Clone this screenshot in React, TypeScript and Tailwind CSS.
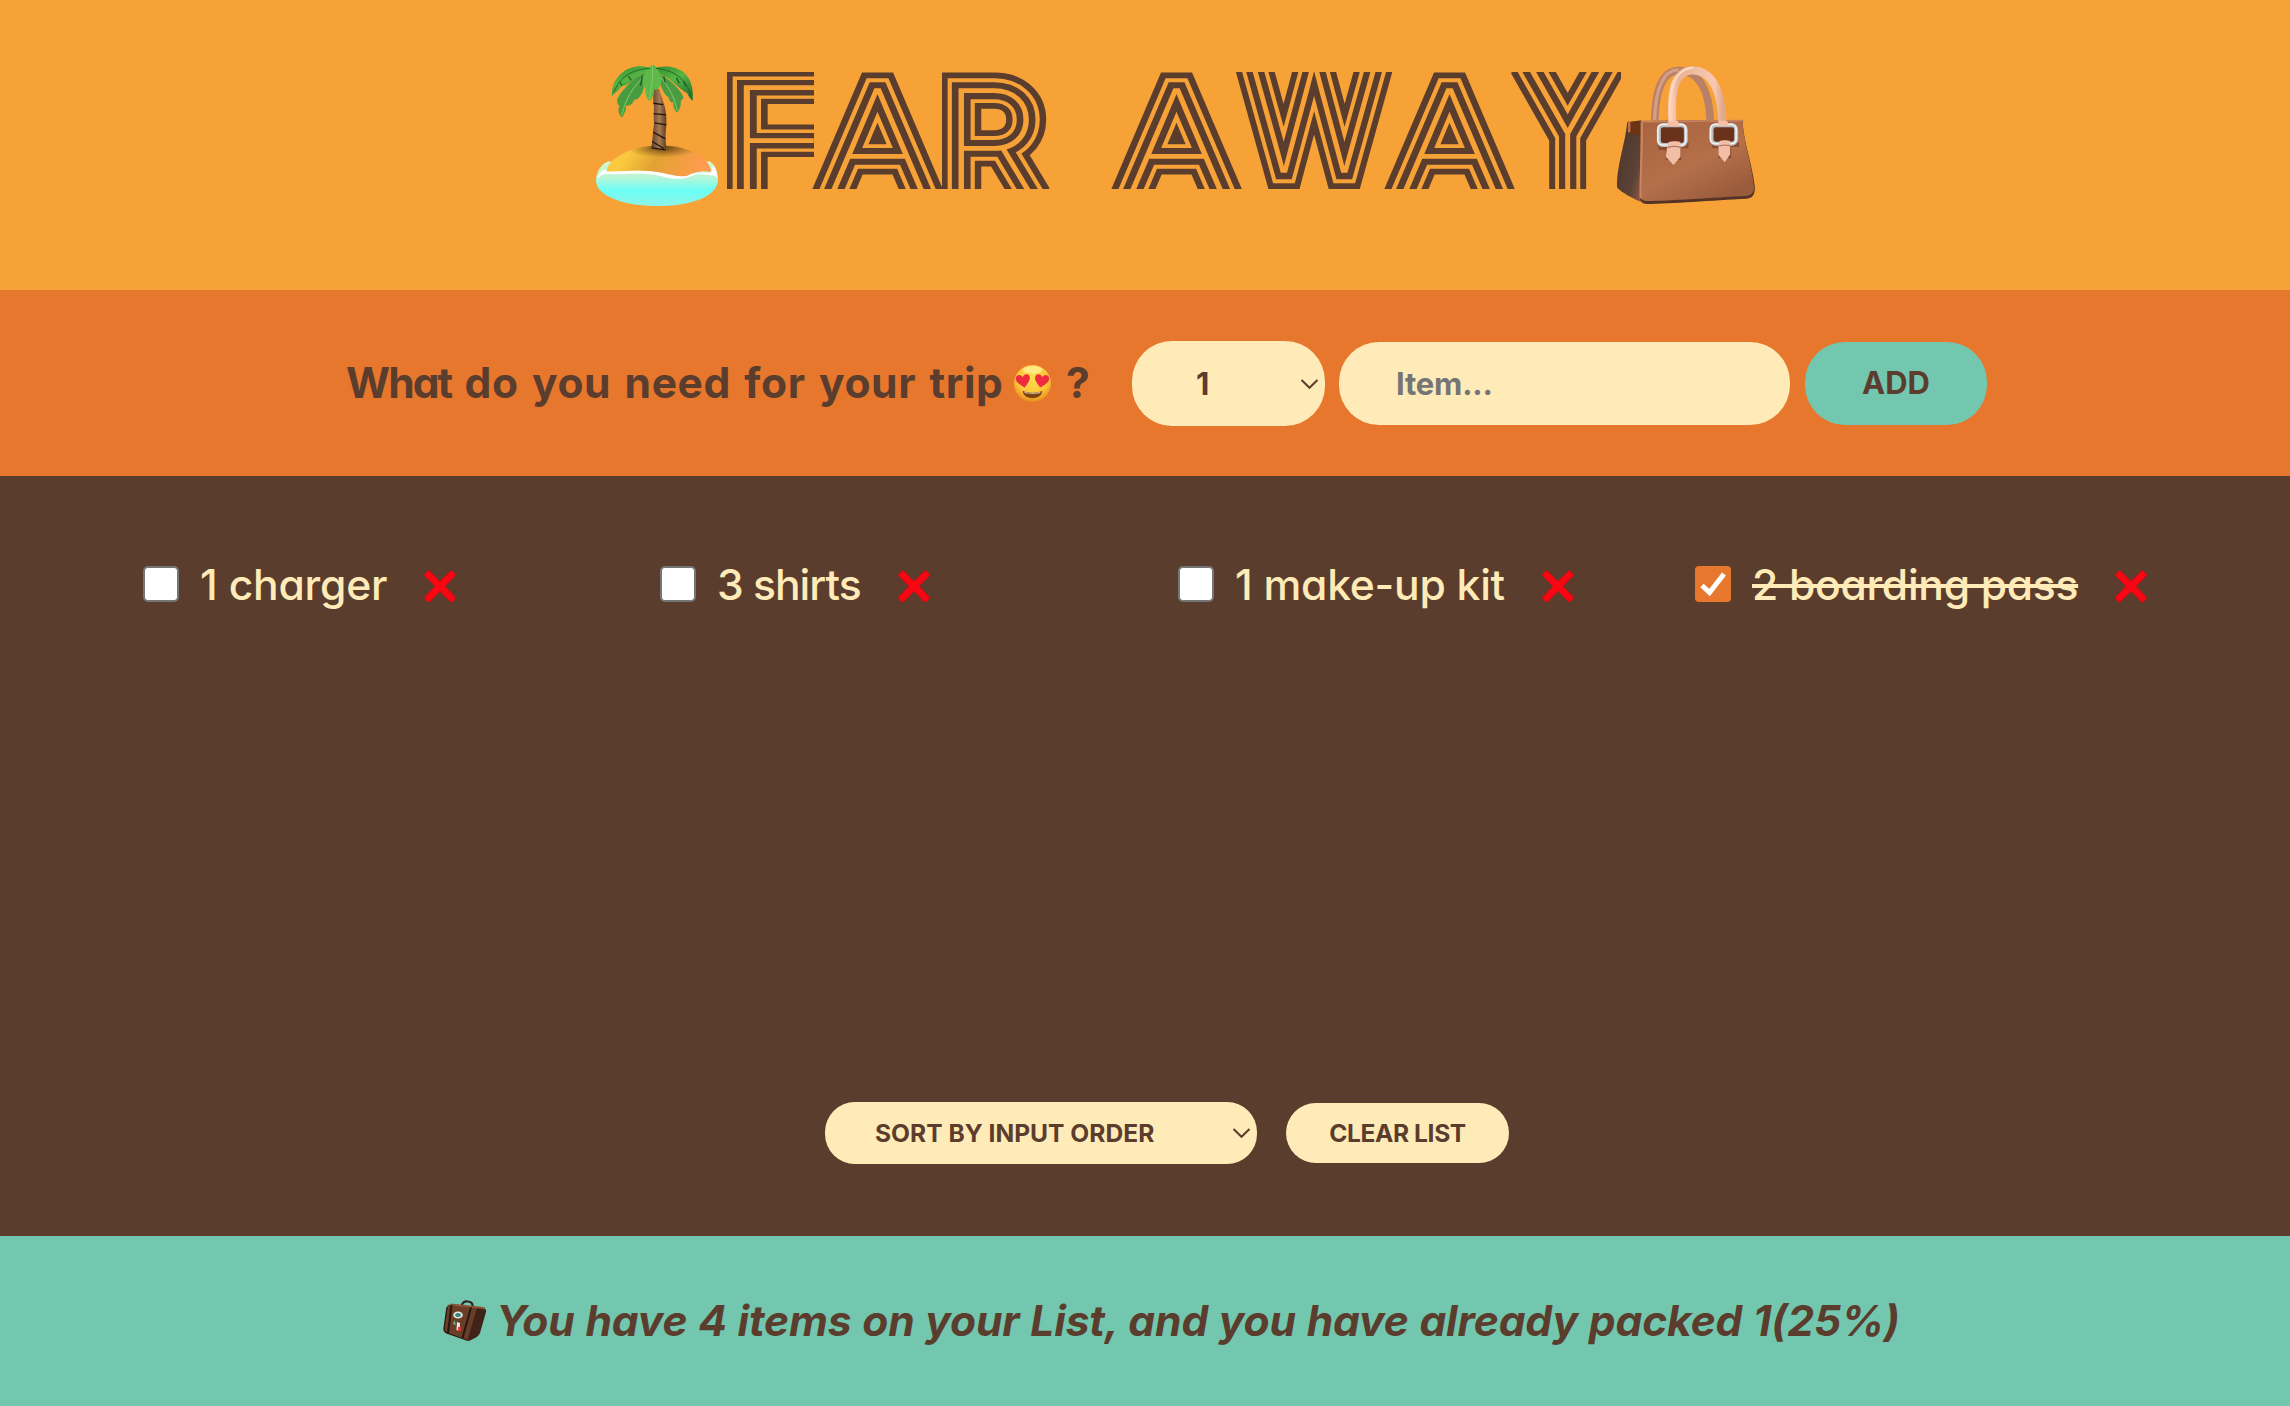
import type { ReactNode } from 'react';

const ORANGE = '#f7a237';
const BROWN = '#5b3d2e';

type Glyph = { id: string; ch: string; x: number; w: number; sx: number; sy: number; dx: number; base: number; k: number };

const GLYPHS: Glyph[] = [
  { id: 'f1', ch: 'F', x: 0, w: 87, sx: 1.38, sy: 1.08, dx: -4, base: 123, k: 0.8 },
  { id: 'a1', ch: 'A', x: 85, w: 131, sx: 1.16, sy: 1.02, dx: 14, base: 120, k: 0.96 },
  { id: 'r1', ch: 'R', x: 215, w: 113, sx: 1.17, sy: 1.06, dx: -1, base: 124, k: 0.92 },
  { id: 'a2', ch: 'A', x: 384, w: 132, sx: 1.16, sy: 1.02, dx: 14, base: 120, k: 0.96 },
  { id: 'w1', ch: 'W', x: 505, w: 163, sx: 1.04, sy: 1.06, dx: 15, base: 100, k: 0.97 },
  { id: 'a3', ch: 'A', x: 657, w: 132, sx: 1.16, sy: 1.02, dx: 14, base: 120, k: 0.96 },
  { id: 'y1', ch: 'Y', x: 782, w: 112, sx: 1.07, sy: 1.36, dx: 11, base: 127, k: 0.93 },
];

function StripedGlyph({ g }: { g: Glyph }) {
  return (
    <svg x={g.x} y={0} width={g.w} height={117} overflow="hidden" strokeMiterlimit={1.8} fill={BROWN}>
      <g stroke={BROWN} strokeWidth={33.8 * g.k}>
        <text
          id={g.id}
          transform={`translate(${g.dx} ${g.base}) scale(${g.sx} ${g.sy})`}
          fontFamily="Inter"
          fontWeight={100}
          fontSize={139}
        >
          {g.ch}
        </text>
      </g>
      <use href={'#' + g.id} stroke={ORANGE} strokeWidth={21.8 * g.k} />
      <use href={'#' + g.id} stroke={BROWN} strokeWidth={14 * g.k} />
      <g fill={ORANGE}>
        <use href={'#' + g.id} stroke={ORANGE} strokeWidth={1.6 * g.k} />
      </g>
    </svg>
  );
}

function Island() {
  return (
    <svg className="h-[143px] w-[123px] shrink-0" viewBox="20 25 370 430">
      <defs>
        <linearGradient id="sea" x1="0" y1="0" x2="0" y2="1">
          <stop offset="0" stopColor="#d8f6cf" />
          <stop offset="0.35" stopColor="#b9f5d6" />
          <stop offset="0.65" stopColor="#6cfff6" />
          <stop offset="1" stopColor="#8ff3e6" />
        </linearGradient>
        <linearGradient id="sand" x1="0" y1="0" x2="1" y2="0.2">
          <stop offset="0" stopColor="#f6c94c" />
          <stop offset="0.25" stopColor="#fbc93e" />
          <stop offset="0.55" stopColor="#e2a232" />
          <stop offset="1" stopColor="#ff9c4e" />
        </linearGradient>
        <radialGradient id="shade" cx="0.5" cy="0.5" r="0.5">
          <stop offset="0" stopColor="#4a2c0c" stopOpacity="0.85" />
          <stop offset="1" stopColor="#7a4c14" stopOpacity="0" />
        </radialGradient>
        <linearGradient id="trunk" x1="0" x2="1" y1="0" y2="0">
          <stop offset="0" stopColor="#5c3d25" />
          <stop offset="0.55" stopColor="#a67a52" />
          <stop offset="1" stopColor="#5c3d25" />
        </linearGradient>
        <linearGradient id="leaf" x1="0" x2="0.6" y1="0" y2="1">
          <stop offset="0" stopColor="#2f8a2a" />
          <stop offset="0.5" stopColor="#57b545" />
          <stop offset="1" stopColor="#2f7a32" />
        </linearGradient>
        <clipPath id="sandclip">
          <path d="M52 346C60 300 140 270 210 269C285 269 360 300 366 346L366 350C340 343 310 352 295 361C260 368 230 350 180 347C130 342 90 350 54 348Z" />
        </clipPath>
      </defs>
      <path d="M20 375C20 345 40 322 58 318L362 318C378 325 387 350 387 372C387 425 300 452 205 452C100 452 20 420 20 375Z" fill="url(#sea)" />
      <path d="M24 372C26 350 45 338 52 345C90 350 130 342 180 347C230 350 255 366 290 361C315 350 345 350 362 352C375 345 365 335 372 332C382 342 385 355 384 366C370 356 350 360 325 355C300 368 260 378 215 362C160 348 100 360 60 356C40 354 30 362 24 372Z" fill="#fff" />
      <path d="M52 346C60 300 140 270 210 269C285 269 360 300 366 346L366 350C340 343 310 352 295 361C260 368 230 350 180 347C130 342 90 350 54 348Z" fill="url(#sand)" />
      <g clipPath="url(#sandclip)">
        <ellipse cx="220" cy="277" rx="110" ry="30" fill="url(#shade)" />
      </g>
      <path d="M193 100L211 100C216 125 230 150 231 180C234 210 226 240 231 270L229 284L186 278C192 250 190 230 195 205C192 180 197 160 192 135Z" fill="url(#trunk)" />
      <path d="M193 143L222 147M193 174L231 178M195 202L232 208M192 230L229 250M189 258L224 279M187 277L229 283" stroke="#24150c" strokeWidth="4" fill="none" />
      <path d="M193 40C160 25 120 32 98 52C76 70 66 95 68 121C78 112 90 102 97 92C110 92 135 72 150 60Z" fill="url(#leaf)" />
      <path d="M188 40C225 26 262 32 284 50C306 70 314 100 311 136C303 130 297 120 294 112C282 108 262 88 240 70Z" fill="url(#leaf)" />
      <path d="M165 52C140 62 98 100 83 132C86 146 84 150 92 150C84 160 87 178 99 185C106 175 112 160 110 150C125 152 132 142 135 132C148 134 152 122 160 110C165 90 172 70 175 55Z" fill="#489c40" />
      <path d="M212 55C236 68 276 100 284 128C279 130 276 134 275 140C276 150 272 162 264 171C256 165 250 150 254 140C244 144 240 132 238 124C226 120 216 95 208 70Z" fill="#4a9b42" />
      <path d="M191 27C165 40 158 70 162 96C168 92 170 98 168 108C170 122 174 132 181 137C190 128 194 112 196 100C204 106 212 98 216 80C218 60 210 38 191 27Z" fill="#5dba49" />
      <path d="M190 32C191 65 188 100 180 130M165 62C135 90 110 125 98 178M215 66C240 95 258 130 264 165" stroke="#86c96c" strokeWidth="3" fill="none" />
      <path d="M182 38C130 42 95 60 74 108M200 38C260 45 290 70 306 122" stroke="#1f6a24" strokeWidth="3" fill="none" />
      <path d="M160 60L154 90M118 62L126 74M92 80L99 90M224 62L228 80M262 66L270 82M284 76L290 92" stroke="#1c5c22" strokeWidth="4" fill="none" />
    </svg>
  );
}

function Handbag() {
  return (
    <svg className="h-[140px] w-[142px] shrink-0" viewBox="30 30 425 420">
      <defs>
        <linearGradient id="front" x1="0" x2="0.7" y1="0" y2="1">
          <stop offset="0" stopColor="#a9623d" />
          <stop offset="0.6" stopColor="#b4704a" />
          <stop offset="1" stopColor="#9a5b3c" />
        </linearGradient>
        <linearGradient id="side" x1="0" x2="1" y1="0" y2="1">
          <stop offset="0" stopColor="#4c3428" />
          <stop offset="0.7" stopColor="#5a4238" />
          <stop offset="1" stopColor="#93583d" />
        </linearGradient>
        <linearGradient id="strap" x1="0" x2="1" y1="0" y2="0">
          <stop offset="0" stopColor="#ffcdb2" />
          <stop offset="0.12" stopColor="#e9b397" />
          <stop offset="0.85" stopColor="#f8c8ae" />
          <stop offset="1" stopColor="#dfa98e" />
        </linearGradient>
      </defs>
      <path d="M149 196C150 140 160 48 220 47C285 48 312 110 315 196" stroke="#b98068" strokeWidth="23" fill="none" />
      <path d="M148 196C150 140 160 46 220 44" stroke="#d49e84" strokeWidth="10" fill="none" />
      <path d="M66 202L108 196L108 440C80 430 50 412 36 398C32 340 62 260 66 202Z" fill="url(#side)" />
      <path d="M68 202L104 198L104 240L68 236Z" fill="#6d3414" />
      <path d="M72 198L72 232" stroke="#bd7650" strokeWidth="7" />
      <path d="M106 198L412 195C414 260 440 320 449 395C450 420 442 428 425 431C320 436 200 446 125 447C108 445 104 436 104 425Z" fill="#543325" />
      <path d="M106 198L412 195C414 260 438 320 446 392C448 412 440 420 425 422C320 428 200 437 125 438C108 436 104 430 104 420Z" fill="url(#front)" />
      <path d="M110 202C112 290 104 370 106 430" stroke="#c98562" strokeWidth="6" fill="none" />
      <path d="M109 200L411 197" stroke="#c5825e" strokeWidth="5" />
      <g fill="#7d4023" opacity="0.7">
        <path d="M158 262H250V280H228V315H182V285H160Z" />
        <path d="M318 262H402V276H378V310H340V280H322Z" />
      </g>
      <path d="M203 210C196 130 200 46 264 46C328 50 350 120 352 210" stroke="url(#strap)" strokeWidth="24" fill="none" />
      <path d="M194 200C190 120 200 42 264 38" stroke="#ffdcc8" strokeWidth="5" fill="none" />
      <g fill="#6a321a" stroke="#b9bfc2" strokeWidth="12">
        <rect x="161" y="211" width="81" height="59" rx="13" />
        <rect x="319" y="211" width="74" height="55" rx="13" />
      </g>
      <g fill="none" stroke="#eef2f3" strokeWidth="5">
        <rect x="158" y="208" width="84" height="62" rx="14" />
        <rect x="316" y="208" width="77" height="58" rx="14" />
      </g>
      <path d="M189 198H218L224 214H186ZM341 198H366L372 212H338Z" fill="#f5c0a5" />
      <path d="M190 262C200 258 220 258 226 262V305L205 330L182 305L186 275ZM343 258C350 255 368 255 375 258V298L359 322L340 300V275Z" fill="#f2bea6" />
      <path d="M187 278C198 274 216 274 226 277M342 273C350 270 366 270 376 272" stroke="#b27a62" strokeWidth="4" fill="none" />
    </svg>
  );
}

function HeartEyes() {
  return (
    <svg className="h-[39px] w-[39px] shrink-0" viewBox="0 0 40 40">
      <defs>
        <radialGradient id="face" cx="0.5" cy="0.35" r="0.65">
          <stop offset="0" stopColor="#ffe04a" />
          <stop offset="0.65" stopColor="#fdc53a" />
          <stop offset="1" stopColor="#e98d1c" />
        </radialGradient>
      </defs>
      <circle cx="20" cy="20" r="19" fill="url(#face)" />
      <ellipse cx="20" cy="6" rx="10" ry="4" fill="#fff3a0" opacity="0.7" />
      <path d="M10 27.500C13 30 27 30 30 27.500C30 32 26 35 20 35S10 32 10 27.500Z" fill="#7c4310" />
      <path d="M11.500 28.300C15 30 25 30 28.500 28.300L28 29.800C24 31 16 31 12 29.800Z" fill="#fff" opacity="0.6" />
      <path d="M12 24C7 21 2 18 3 14C4 10.500 8 10.500 10 13.500C11 10 15.500 9.500 17 12.500C18.500 16.500 15 20 12 24Z" fill="#ee2b40" />
      <path d="M28 24C33 21 38 18 37 14C36 10.500 32 10.500 30 13.500C29 10 24.500 9.500 23 12.500C21.500 16.500 25 20 28 24Z" fill="#ee2b40" />
    </svg>
  );
}

function Suitcase() {
  return (
    <svg className="h-[42px] w-[44px] shrink-0" viewBox="0 0 44 42">
      <path d="M19 8C18 2 22 1 25 1.500C29 2 30 4 29.500 8" stroke="#2c241f" strokeWidth="2.200" fill="none" />
      <path d="M4 7Q4 4 8 4.500L35 8L26 41L3 33Q0 31 1 27Z" fill="#6a3d27" />
      <path d="M34 8L41 8Q43.500 9 43 12L37 33Q36 36 32 38L26 41L25 38Z" fill="#3d2318" />
      <path d="M8 4.500L36 7.500L42 8.500" stroke="#8a5236" strokeWidth="1.800" fill="none" />
      <path d="M8.500 5L5 33M28 7.500L19.500 38" stroke="#251712" strokeWidth="2" />
      <path d="M4 7L1 29Q1 32 5 33.500L25 40.500" stroke="#2f1b13" strokeWidth="1.300" fill="none" />
      <ellipse cx="15" cy="15" rx="4.800" ry="3.600" fill="#dfe7e2" />
      <ellipse cx="15" cy="15" rx="2.800" ry="2" fill="#39867b" />
      <path d="M14 22L17 23L16.500 31L13.500 30Z" fill="#e8e8e8" />
      <path d="M10 24L11.500 20L13 25Z" fill="#5fb98b" />
      <path d="M15 27H18V31H15Z" fill="#d23a35" />
    </svg>
  );
}

function Cross() {
  return (
    <svg className="h-[33px] w-[34px]" viewBox="0 0 34 33">
      <path
        d="M6.500 .8L17 11.200L27.500 .8Q28.500 .2 29.300 1L32.600 4.200Q33.200 5 32.500 5.800L22.200 16.300L32.500 27Q33.200 27.800 32.500 28.600L29 32Q28.200 32.600 27.400 31.900L17 21.500L6.600 31.900Q5.800 32.600 5 32L1.500 28.600Q.8 27.800 1.500 27L11.800 16.300L1.500 5.800Q.8 5 1.500 4.200L4.800 1Q5.600 .2 6.500 .8Z"
        fill="#f80612"
        stroke="#a81216"
        strokeWidth=".6"
      />
    </svg>
  );
}

function Chevron() {
  return (
    <svg className="pointer-events-none absolute top-1/2 right-[6px] h-[11px] w-[19px] -translate-y-1/2" viewBox="0 0 19 11">
      <path d="M1.500 1.500L9.500 9.300L17.500 1.500" fill="none" stroke={BROWN} strokeWidth="2" />
    </svg>
  );
}

function Item({ children, packed, spacing }: { children: ReactNode; packed?: boolean; spacing: string }) {
  return (
    <li className="flex h-14 items-center">
      {packed ? (
        <span className="flex size-9 shrink-0 items-center justify-center rounded-[4px] bg-[#e7772d]">
          <svg className="size-9" viewBox="0 0 36 36">
            <path d="M7 19.500L14.500 26.500L29 8" fill="none" stroke="#fff" strokeWidth="5" />
          </svg>
        </span>
      ) : (
        <span className="size-9 shrink-0 rounded-[5px] border-2 border-[#767676] bg-white" />
      )}
      <span
        className={
          'mt-[2px] ml-[21px] text-[42.6px] leading-[56px] font-medium whitespace-nowrap text-[#ffebb8] ' +
          spacing +
          (packed ? ' line-through decoration-[4px]' : '')
        }
      >
        {children}
      </span>
      <button className="mt-[5px] ml-9">
        <Cross />
      </button>
    </li>
  );
}

export default function App() {
  return (
    <div className="flex h-[1406px] w-[2290px] flex-col overflow-hidden font-['Inter',sans-serif] text-[#5b3d2e] [font-feature-settings:'cv11']">
      <header className="flex h-[290px] items-start bg-[#f7a237] pl-[596px]">
        <div className="mt-[64px]">
          <Island />
        </div>
        <h1 className="mt-[72px] ml-[8px]" aria-label="Far Away">
          <svg className="block h-[117px] w-[894px]" viewBox="0 0 894 117">
            {GLYPHS.map((g) => (
              <StripedGlyph key={g.id} g={g} />
            ))}
          </svg>
        </h1>
        <div className="mt-[65px] -ml-[6px]">
          <Handbag />
        </div>
      </header>

      <form className="flex h-[186px] items-center bg-[#e7772d] pt-px pl-[346px]">
        <h3 className="flex items-center text-[42.6px] leading-[54px] font-[650] whitespace-nowrap">
          <span className="mb-[2px] w-[667px] tracking-[0.6px] [word-spacing:2.6px]">
            <span className="tracking-[-2px]">What</span> do you need for your trip
          </span>
          <HeartEyes />
          <span className="mb-[2px] ml-[14px] w-[66px]">?</span>
        </h3>
        <div className="relative">
          <div className="flex h-[85px] w-[193px] items-center rounded-[40px] bg-[#ffebb8] pt-px pl-[64px] text-[31px] font-[650]">1</div>
          <Chevron />
        </div>
        <input
          className="ml-[14px] h-[83px] w-[451px] rounded-[40px] bg-[#ffebb8] px-[57px] text-[31px] font-[650] tracking-[-0.2px] placeholder:text-[#757575]"
          placeholder="Item..."
        />
        <button type="button" className="ml-[15px] h-[83px] w-[182px] rounded-[40px] bg-[#74c7af] text-[31px] font-[650]">
          ADD
        </button>
      </form>

      <main className="flex h-[760px] flex-col justify-between bg-[#5b3d2e] pt-[80px] pb-[72px]">
        <ul className="grid grid-cols-[517px_518px_517px_auto] pl-[143px]">
          <Item spacing="tracking-[-0.2px]">1 charger</Item>
          <Item spacing="tracking-[-1px]">3 shirts</Item>
          <Item spacing="tracking-[-0.25px]">1 make-up kit</Item>
          <Item packed spacing="tracking-[-0.3px]">
            2 boarding pass
          </Item>
        </ul>
        <div className="flex items-center gap-[29px] pl-[825px] text-[24.6px] font-[650]">
          <div className="relative">
            <div className="flex h-[62px] w-[432px] items-center rounded-[30px] bg-[#ffebb8] pl-[50px]">SORT BY INPUT ORDER</div>
            <Chevron />
          </div>
          <button className="h-[60px] w-[223px] rounded-[30px] bg-[#ffebb8] tracking-[-0.4px]">CLEAR LIST</button>
        </div>
      </main>

      <footer className="flex flex-1 items-center bg-[#74c7af] pl-[443px]">
        <Suitcase />
        <em className="ml-[9px] text-[42.6px] leading-[56px] font-[650] tracking-[-0.15px] whitespace-nowrap [word-spacing:0.8px]">
          You have 4 items on your List, and you have already packed 1(25%)
        </em>
      </footer>
    </div>
  );
}
